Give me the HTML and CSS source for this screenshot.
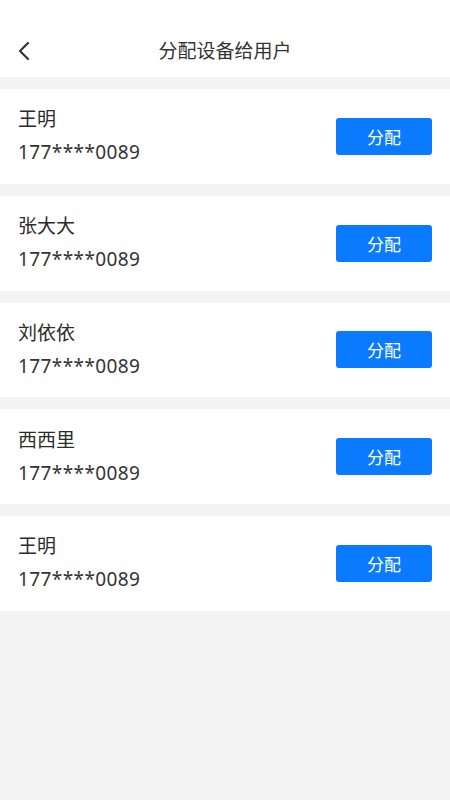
FILE: index.html
```html
<!DOCTYPE html>
<html lang="zh-CN">
<head>
   <meta charset="UTF-8">
   <title>分配设备给用户</title>
   <link rel="stylesheet" href="styles.css">
</head>

<body>

<div class="nav">
   <span class="nav-back">
      <svg width="14" height="20" viewBox="0 0 14 20">
         <path d="M11 2 L3 10 L11 18" fill="none" stroke="#333" stroke-width="2.2" stroke-linecap="round" stroke-linejoin="round"/>
      </svg>
   </span>
   <h1 class="nav-title">分配设备给用户</h1>
</div>

<div class="list">
   <div class="user">
      <div class="user-info">
         <div class="user-name">王明</div>
         <div class="user-phone">177****0089</div>
      </div>
      <button class="btn">分配</button>
   </div>

   <div class="user">
      <div class="user-info">
         <div class="user-name">张大大</div>
         <div class="user-phone">177****0089</div>
      </div>
      <button class="btn">分配</button>
   </div>

   <div class="user">
      <div class="user-info">
         <div class="user-name">刘依依</div>
         <div class="user-phone">177****0089</div>
      </div>
      <button class="btn">分配</button>
   </div>

   <div class="user">
      <div class="user-info">
         <div class="user-name">西西里</div>
         <div class="user-phone">177****0089</div>
      </div>
      <button class="btn">分配</button>
   </div>

   <div class="user">
      <div class="user-info">
         <div class="user-name">王明</div>
         <div class="user-phone">177****0089</div>
      </div>
      <button class="btn">分配</button>
   </div>
</div>

</body>
</html>
```

FILE: styles.css
```css
html {
   height: 100%;
}

body {
   margin: 0;
   min-height: 100%;
   background: #f4f4f4;
   color: #333;
   font-family: "Noto Sans", "Noto Sans CJK SC", sans-serif;
}

.nav {
   height: 77px;
   background: #fff;
   display: flex;
   align-items: center;
   justify-content: center;
   position: relative;
   box-sizing: border-box;
}

.nav-back {
   position: absolute;
   left: 17px;
   top: 41px;
   display: flex;
}

.nav-title {
   margin: 0;
   font-size: 19px;
   font-weight: normal;
   line-height: 24px;
   margin-top: 24px;
}

.list {
   padding-top: 12px;
   display: flex;
   flex-direction: column;
   gap: 12px;
}

.user {
   height: 94.75px;
   background: #fff;
   display: flex;
   align-items: center;
   justify-content: space-between;
   padding: 0 18px;
}

.user-info {
   padding-bottom: 1px;
}

.user-name {
   font-size: 19px;
   line-height: 26px;
   color: #2b2b2b;
}

.user-phone {
   font-size: 19px;
   line-height: 26px;
   letter-spacing: 0.4px;
   margin-top: 7px;
}

.btn {
   width: 96px;
   height: 37px;
   border: none;
   border-radius: 3px;
   background: #0a7bff;
   color: #fff;
   font-family: "Noto Sans CJK SC", sans-serif;
   font-size: 17px;
   padding: 0;
}
```
